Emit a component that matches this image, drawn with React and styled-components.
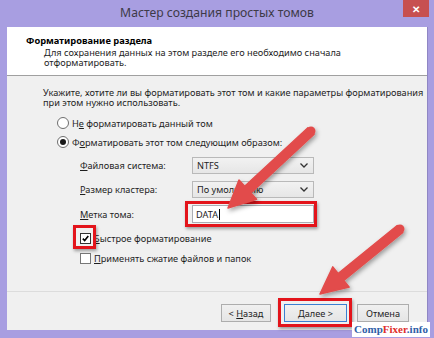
import React from "react";
import styled, { createGlobalStyle } from "styled-components";

const Global = createGlobalStyle`
  html, body { margin: 0; padding: 0; }
  body { background: #a89ee1; font-family: "Noto Sans", "Liberation Sans", sans-serif; }
`;

const Window = styled.div`
  position: relative;
  width: 434px;
  height: 338px;
  background: #a89ee1;
  display: flex;
  flex-direction: column;
  overflow: hidden;
`;

const TitleBar = styled.div`
  height: 27px;
  display: grid;
  grid-template-columns: 1fr auto 1fr;
  align-items: start;
`;

const Title = styled.div`
  grid-column: 2;
  font-size: 12.2px;
  line-height: 26px;
  color: #3d3a48;
  white-space: nowrap;
`;

const Close = styled.div`
  grid-column: 3;
  justify-self: end;
  margin-right: 5px;
  width: 26px;
  height: 17px;
  background: #c75050;
  color: #fff;
  font-size: 10px;
  font-weight: bold;
  display: flex;
  align-items: center;
  justify-content: center;
`;

const Client = styled.div`
  flex: 1;
  margin: 0 6px 8px 7px;
  background: #f0f0f0;
  border-right: 1px solid #8f86c4;
  display: flex;
  flex-direction: column;
  font-size: 9.2px;
  color: #1e1e1e;
  white-space: nowrap;
`;

const Header = styled.div`
  height: 49px;
  box-sizing: border-box;
  background: #fff;
  border-bottom: 1px solid #a0a0a0;
  padding: 8px 0 0 19px;
`;

const HeaderTitle = styled.div`
  font-weight: bold;
  font-size: 9.3px;
  line-height: 12px;
  color: #000;
`;

const HeaderText = styled.div`
  padding-left: 18px;
  margin-top: 1px;
  line-height: 10px;
`;

const Body = styled.div`
  flex: 1;
  padding: 12px 0 0 36px;
  display: flex;
  flex-direction: column;
`;

const Intro = styled.div`
  line-height: 10px;
`;

const Option = styled.label`
  display: flex;
  align-items: center;
  gap: 3px;
  height: 16px;
  margin-top: ${(p) => p.$top}px;
  margin-left: ${(p) => p.$indent}px;
`;

const Radio = styled.span`
  width: 10px;
  height: 10px;
  border: 1px solid #6e6e6e;
  border-radius: 50%;
  background: #fff;
  display: flex;
  align-items: center;
  justify-content: center;
  &::after {
    content: "";
    width: 6px;
    height: 6px;
    border-radius: 50%;
    background: ${(p) => (p.$on ? "#1a1a1a" : "transparent")};
  }
`;

const Check = styled.span`
  width: 9px;
  height: 9px;
  border: 1px solid ${(p) => (p.$on ? "#333" : "#777")};
  background: #fff;
  display: flex;
  align-items: center;
  justify-content: center;
`;

const Tick = styled.svg`
  width: 7px;
  height: 7px;
`;

const U = styled.span`
  text-decoration: underline;
`;

const Grid = styled.div`
  display: grid;
  grid-template-columns: 112px 122px;
  row-gap: 7px;
  margin: 7px 0 0 37px;
  align-items: center;
`;

const FieldLabel = styled.div``;

const Combo = styled.div`
  height: 17px;
  box-sizing: border-box;
  border: 1px solid #b9b9b9;
  background: linear-gradient(#f2f2f2, #e6e6e6);
  display: flex;
  align-items: center;
  justify-content: space-between;
  padding: 0 5px 0 4px;
  overflow: hidden;
`;

const Chevron = styled.svg`
  width: 8px;
  height: 5px;
  flex: none;
`;

const TextField = styled.div`
  height: 18px;
  box-sizing: border-box;
  border: 1px solid #abadb3;
  background: #fff;
  display: flex;
  align-items: center;
  padding-left: 3px;
`;

const Caret = styled.span`
  display: inline-block;
  width: 1px;
  height: 11px;
  background: #000;
  margin-left: 1px;
`;

const Footer = styled.div`
  height: 39px;
  box-sizing: border-box;
  border-top: 1px solid #dcdcdc;
  display: flex;
  align-items: flex-start;
  padding: 12px 0 0 214px;
`;

const Button = styled.div`
  width: ${(p) => p.$w}px;
  height: 18px;
  box-sizing: border-box;
  margin-left: ${(p) => p.$ml}px;
  border: 1px solid ${(p) => (p.$def ? "#3c7fd1" : "#adadad")};
  background: linear-gradient(#f0f0f0, #e5e5e5);
  display: flex;
  align-items: center;
  justify-content: center;
`;

const Mark = styled.div`
  position: absolute;
  left: ${(p) => p.$x}px;
  top: ${(p) => p.$y}px;
  width: ${(p) => p.$w}px;
  height: ${(p) => p.$h}px;
  box-sizing: border-box;
  border: 3px solid #e3141b;
  box-shadow: 1px 2px 3px rgba(0, 0, 0, 0.35);
  pointer-events: none;
`;

const Overlay = styled.svg`
  position: absolute;
  left: 0;
  top: 0;
  width: 434px;
  height: 338px;
  pointer-events: none;
`;

const Watermark = styled.div`
  position: absolute;
  left: 352px;
  top: 322px;
  width: 78px;
  height: 15px;
  background: #fff;
  font-family: "Liberation Serif", "DejaVu Serif", serif;
  font-weight: bold;
  font-size: 11px;
  line-height: 15px;
  text-align: center;
  color: #2f5ea8;
  white-space: nowrap;
`;

const Red = styled.span`
  color: #e0302c;
`;

function arrowPoints(tx, ty, hx, hy) {
  const dx = hx - tx;
  const dy = hy - ty;
  const len = Math.hypot(dx, dy);
  const ux = dx / len;
  const uy = dy / len;
  const nx = -uy;
  const ny = ux;
  const sw = 4.5;
  const hw = 13;
  const hl = 27;
  const bx = hx - ux * hl;
  const by = hy - uy * hl;
  const pts = [
    [tx + nx * sw, ty + ny * sw],
    [bx + nx * sw, by + ny * sw],
    [bx + nx * hw, by + ny * hw],
    [hx, hy],
    [bx - nx * hw, by - ny * hw],
    [bx - nx * sw, by - ny * sw],
    [tx - nx * sw, ty - ny * sw],
  ];
  return pts.map((p) => p.map((v) => v.toFixed(1)).join(",")).join(" ");
}

const chevron = (
  <Chevron viewBox="0 0 8 5">
    <path d="M0.5 0.5 L4 4 L7.5 0.5" fill="none" stroke="#333" strokeWidth="1.3" />
  </Chevron>
);

export default function App() {
  return (
    <>
      <Global />
      <Window>
        <TitleBar>
          <Title>Мастер создания простых томов</Title>
          <Close>✕</Close>
        </TitleBar>
        <Client>
          <Header>
            <HeaderTitle>Форматирование раздела</HeaderTitle>
            <HeaderText>
              Для сохранения данных на этом разделе его необходимо сначала
              <br />
              отформатировать.
            </HeaderText>
          </Header>
          <Body>
            <Intro>
              Укажите, хотите ли вы форматировать этот том и какие параметры форматирования
              <br />
              при этом нужно использовать.
            </Intro>
            <Option $top={7} $indent={14}>
              <Radio />
              <span>
                Н<U>е</U> форматировать данный том
              </span>
            </Option>
            <Option $top={3} $indent={14}>
              <Radio $on />
              <span>
                Ф<U>о</U>рматировать этот том следующим образом:
              </span>
            </Option>
            <Grid>
              <FieldLabel>
                <U>Ф</U>айловая система:
              </FieldLabel>
              <Combo>
                NTFS
                {chevron}
              </Combo>
              <FieldLabel>
                <U>Р</U>азмер кластера:
              </FieldLabel>
              <Combo>
                По умолчанию
                {chevron}
              </Combo>
              <FieldLabel>
                <U>М</U>етка тома:
              </FieldLabel>
              <TextField>
                DATA
                <Caret />
              </TextField>
            </Grid>
            <Option $top={7} $indent={37}>
              <Check $on>
                <Tick viewBox="0 0 7 7">
                  <path d="M0.8 3.6 L2.7 5.6 L6.3 1" fill="none" stroke="#000" strokeWidth="1.6" />
                </Tick>
              </Check>
              <span>
                <U>Б</U>ыстрое форматирование
              </span>
            </Option>
            <Option $top={4} $indent={37}>
              <Check />
              <span>
                <U>П</U>рименять сжатие файлов и папок
              </span>
            </Option>
          </Body>
          <Footer>
            <Button $w={50} $ml={0}>
              &lt;&nbsp;<U>Н</U>азад
            </Button>
            <Button $w={63} $ml={13} $def>
              <U>Д</U>алее &gt;
            </Button>
            <Button $w={52} $ml={10}>
              Отмена
            </Button>
          </Footer>
        </Client>
        <Mark $x={185} $y={201} $w={132} $h={26} />
        <Mark $x={73} $y={225} $w={23} $h={24} />
        <Mark $x={278} $y={298} $w={74} $h={29} />
        <Overlay viewBox="0 0 434 338">
          <defs>
            <filter id="sh" x="-20%" y="-20%" width="140%" height="140%">
              <feDropShadow dx="1.5" dy="2.5" stdDeviation="2" floodColor="#000" floodOpacity="0.35" />
            </filter>
          </defs>
          <g filter="url(#sh)" fill="#e24c4b" stroke="#e24c4b" strokeWidth="1.5" strokeLinejoin="round">
            <polygon points={arrowPoints(311, 131, 228, 208)} />
            <circle cx="311" cy="131" r="4.5" stroke="none" />
            <polygon points={arrowPoints(400, 229, 320, 294)} />
            <circle cx="400" cy="229" r="4.5" stroke="none" />
          </g>
        </Overlay>
        <Watermark>
          Comp<Red>Fixer</Red>.info
        </Watermark>
      </Window>
    </>
  );
}
